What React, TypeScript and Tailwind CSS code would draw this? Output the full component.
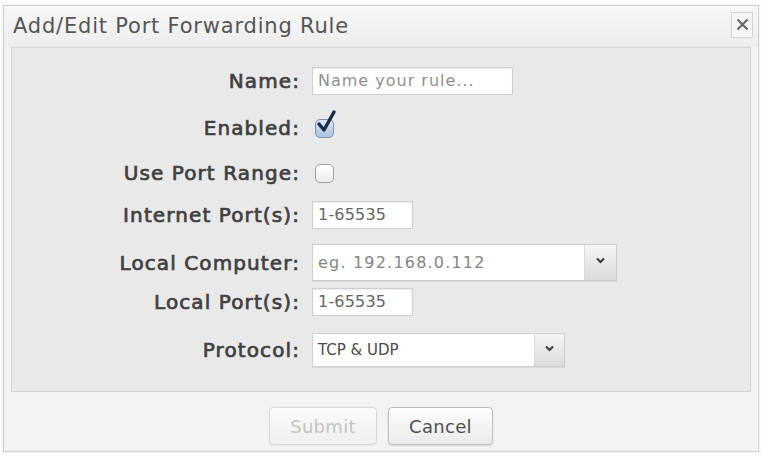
import React from 'react';

const labelCls = 'w-[288px] shrink-0 text-right text-[20px] text-[#404040] tracking-[1.1px] [-webkit-text-stroke:0.7px_#404040]';

const Row = ({ label, className, children }: { label: string; className: string; children: React.ReactNode }) => (
  <div className={`flex items-center ${className}`}>
    <div className={labelCls}>{label}</div>
    <div className="ml-[12px] flex items-center">{children}</div>
  </div>
);

const TextBox = ({ width, text, muted }: { width: string; text: string; muted?: boolean }) => (
  <div
    className={`${width} h-[28px] flex items-center px-[5px] bg-white border border-[#cfcfcf] shadow-[inset_0_1px_2px_rgba(0,0,0,0.08)] text-[16px] ${
      muted ? 'text-[#8f8f8f] tracking-[1px]' : 'text-[#666] tracking-[0.2px]'
    }`}
  >
    {text}
  </div>
);

const Chevron = () => (
  <svg width="11" height="7" viewBox="0 0 11 7">
    <path d="M2 1.5 L5.5 5 L9 1.5" fill="none" stroke="#3f3f3f" strokeWidth="2.2" />
  </svg>
);

const SelectBox = ({
  width,
  arrow,
  height,
  text,
  textCls,
}: {
  width: string;
  arrow: string;
  height: string;
  text: string;
  textCls: string;
}) => (
  <div className={`${width} ${height} flex bg-white border border-[#cfcfcf] shadow-[0_1px_1px_rgba(0,0,0,0.06)]`}>
    <div className={`flex-1 flex items-center px-[5px] ${textCls}`}>{text}</div>
    <div className={`${arrow} flex items-center justify-center pb-[4px] border-l border-[#dadada] bg-gradient-to-b from-[#f5f5f5] to-[#dcdcdc]`}>
      <Chevron />
    </div>
  </div>
);

const CheckBox = ({ checked }: { checked?: boolean }) => (
  <div className="relative w-[20px] h-[20px] ml-[3px]">
    <div
      className={`w-[19px] h-[19px] mt-[1px] rounded-[5px] border ${
        checked ? 'border-[#7d93ad] bg-gradient-to-b from-[#dbe8f5] to-[#a9c3df]' : 'border-[#9f9f9f] bg-gradient-to-b from-white to-[#ececec]'
      }`}
    />
    {checked && (
      <svg className="absolute left-[1px] top-[-8px]" width="22" height="26" viewBox="0 0 22 26">
        <path d="M3 14 L8 20 L18 2" fill="none" stroke="#1d2c45" strokeWidth="3.4" strokeLinecap="round" strokeLinejoin="round" />
      </svg>
    )}
  </div>
);

export default function App() {
  return (
    <div className="w-[767px] h-[460px] bg-white pt-[5px] pl-[3px]" style={{ fontFamily: '"DejaVu Sans", Verdana, sans-serif' }}>
      <div className="w-[756px] h-[447px] flex flex-col border border-[#cfcfcf] bg-[#f3f3f3] shadow-[0_0_3px_rgba(0,0,0,0.12)]">
        {/* title bar */}
        <div className="h-[41px] flex items-center justify-between pl-[9px] pr-[5px] bg-gradient-to-b from-[#f7f7f7] to-[#ededed]">
          <div className="text-[21px] text-[#555] tracking-[0.8px]">Add/Edit Port Forwarding Rule</div>
          <div className="w-[22px] h-[26px] mt-[-4px] flex items-center justify-center border border-[#d4d4d4] bg-[#f6f6f6]">
            <svg width="13" height="13" viewBox="0 0 13 13">
              <path d="M1.5 1.5 L11.5 11.5 M11.5 1.5 L1.5 11.5" stroke="#6a6a6a" strokeWidth="2.2" />
            </svg>
          </div>
        </div>

        {/* form panel */}
        <div className="mx-[7px] h-[345px] flex flex-col border border-[#d2d2d2] bg-[#e9e9e9] pt-[19px]">
          <Row label="Name:" className="h-[28px]">
            <TextBox width="w-[201px]" text="Name your rule..." muted />
          </Row>
          <Row label="Enabled:" className="h-[28px] mt-[19px]">
            <CheckBox checked />
          </Row>
          <Row label="Use Port Range:" className="h-[28px] mt-[17px]">
            <CheckBox />
          </Row>
          <Row label="Internet Port(s):" className="h-[28px] mt-[14px]">
            <TextBox width="w-[101px]" text="1-65535" />
          </Row>
          <Row label="Local Computer:" className="h-[37px] mt-[15px]">
            <SelectBox
              width="w-[305px]"
              height="h-[37px]"
              arrow="w-[32px]"
              text="eg. 192.168.0.112"
              textCls="text-[16px] tracking-[1.2px] text-[#858585]"
            />
          </Row>
          <Row label="Local Port(s):" className="h-[28px] mt-[7px]">
            <TextBox width="w-[101px]" text="1-65535" />
          </Row>
          <Row label="Protocol:" className="h-[34px] mt-[17px]">
            <SelectBox width="w-[253px]" height="h-[34px]" arrow="w-[30px]" text="TCP & UDP" textCls="text-[15px] text-[#4a4a4a]" />
          </Row>
        </div>

        {/* footer */}
        <div className="flex-1 flex items-start justify-center gap-[11px] pt-[15px]">
          <button className="w-[108px] h-[38px] rounded-[4px] border border-[#d8d8d8] bg-gradient-to-b from-[#fbfbfb] to-[#efefef] text-[18px] tracking-[0.3px] text-[#c4c4c4] shadow-[0_1px_2px_rgba(0,0,0,0.06)]">
            Submit
          </button>
          <button className="w-[105px] h-[38px] rounded-[4px] border border-[#bdbdbd] bg-gradient-to-b from-[#fdfdfd] to-[#ebebeb] text-[18px] tracking-[0.3px] text-[#4f4f4f] shadow-[0_1px_2px_rgba(0,0,0,0.12)]">
            Cancel
          </button>
        </div>
      </div>
    </div>
  );
}
